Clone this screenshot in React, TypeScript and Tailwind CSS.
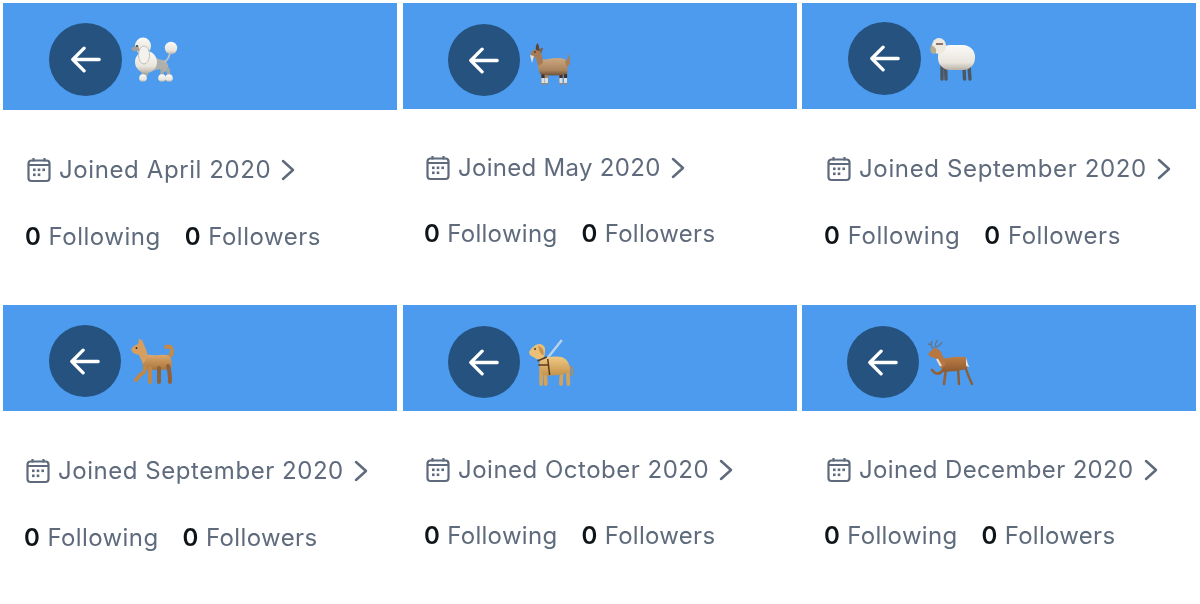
import type { ReactNode } from 'react';

function Emoji({ children }: { children: ReactNode }) {
  return (
    <svg width="50" height="50" viewBox="0 0 50 50" className="shrink-0">
      <defs>
        <linearGradient id="wool" x1="0" y1="0" x2="0" y2="1">
          <stop offset="0" stopColor="#fbfaf7" />
          <stop offset="0.7" stopColor="#e9e5dd" />
          <stop offset="1" stopColor="#b9b2a6" />
        </linearGradient>
        <linearGradient id="goat" x1="0" y1="0" x2="0" y2="1">
          <stop offset="0" stopColor="#cda87f" />
          <stop offset="0.7" stopColor="#a9835c" />
          <stop offset="1" stopColor="#6d5039" />
        </linearGradient>
        <linearGradient id="dog" x1="0" y1="0" x2="0" y2="1">
          <stop offset="0" stopColor="#e3ae70" />
          <stop offset="1" stopColor="#a8743e" />
        </linearGradient>
        <linearGradient id="lab" x1="0" y1="0" x2="0" y2="1">
          <stop offset="0" stopColor="#f1c983" />
          <stop offset="1" stopColor="#c4934c" />
        </linearGradient>
        <linearGradient id="deer" x1="0" y1="0" x2="0" y2="1">
          <stop offset="0" stopColor="#bd7e47" />
          <stop offset="1" stopColor="#8d5a30" />
        </linearGradient>
      </defs>
      {children}
    </svg>
  );
}

const poodle = (
  <Emoji>
    <path d="M20 21 Q30 23 36 25 Q39 29 38 35 L33 36 L30 33 L21 35 Z" fill="#aeb0ae" />
    <path d="M34 26 Q39 24 40 16" stroke="#c2c3c0" strokeWidth="1.8" fill="none" />
    <path d="M13 32 V41 M19 32 L16 39 M32 34 V41 M38 33 L39 41" stroke="#a8aaa8" strokeWidth="3.2" strokeLinecap="round" />
    <circle cx="41" cy="12" r="6.200" fill="url(#wool)" />
    <circle cx="13" cy="42" r="3.800" fill="url(#wool)" />
    <circle cx="32" cy="42" r="3.800" fill="url(#wool)" />
    <circle cx="39" cy="42" r="3.800" fill="url(#wool)" />
    <ellipse cx="16" cy="26" rx="11" ry="11" fill="url(#wool)" />
    <ellipse cx="13" cy="10" rx="8" ry="8.500" fill="url(#wool)" />
    <path d="M8 9 L1 12 L3 15 L10 15 Z" fill="#a5a29c" />
    <ellipse cx="14" cy="19" rx="5.500" ry="9" fill="#f4f2ee" stroke="#b9b5ad" strokeWidth="0.8" />
    <circle cx="7" cy="10" r="0.9" fill="#333" />
  </Emoji>
);

const goat = (
  <Emoji>
    <path d="M15 34 L15 46 M19 34 L18.500 46 M33 34 L33 46 M37 34 L37.500 46" stroke="#a9835c" strokeWidth="3.200" strokeLinecap="round" />
    <path d="M15 37 V41 M33 37 V41 M37.500 37 V41" stroke="#3f3129" strokeWidth="3.200" />
    <path d="M15 41 V46 M18.500 41 V46 M33 41 V46 M37.500 41 V46" stroke="#d7e0e4" strokeWidth="3" />
    <path d="M10 22 Q14 23 20 22 Q30 20 37 22 Q41 27 39 37 Q26 40 12 37 Q9 30 10 22 Z" fill="url(#goat)" />
    <path d="M37 24 Q42 22 39 16 Q43 19 42 27 L39 30 Z" fill="#a67f5b" />
    <path d="M3 15 Q7 11 11 13 Q14 15 15 26 L10 29 L8 21 L3 19 Z" fill="#a67c58" />
    <path d="M8 13 Q7 8 10 6 L12 14 Z" fill="#5e4331" />
    <path d="M12 13 Q13 10 15 11 L13 17 Z" fill="#7d5a40" />
    <path d="M2 18 L6 19 L4 26 Z" fill="#e4e0d6" />
    <circle cx="7" cy="15" r="0.8" fill="#22180f" />
  </Emoji>
);

const sheep = (
  <Emoji>
    <path d="M13 31 L13 44 M16.500 31 L17 44 M35 31 L35.500 44 M40 31 L41 44" stroke="#4e5660" strokeWidth="3.400" strokeLinecap="round" />
    <rect x="9" y="10" width="37" height="25" rx="12" fill="url(#wool)" />
    <ellipse cx="10" cy="11" rx="7" ry="8" fill="#eee9df" />
    <path d="M2 10 Q0 17 4 19 Q8 19 7 14 Q5 11 2 10 Z" fill="#b9ab8e" />
    <path d="M7 9 H14" stroke="#6d4a4a" strokeWidth="1.500" />
  </Emoji>
);

const dog = (
  <Emoji>
    <path d="M33 20 Q43 20 43 13 Q43 7 37 9" stroke="#c48a4c" strokeWidth="4" fill="none" strokeLinecap="round" />
    <path d="M13 15 Q20 18 30 17 Q38 16 41 19 Q44 24 42 31 Q28 33 14 31 Z" fill="url(#dog)" />
    <path d="M39 28 Q41 34 41 44 M30 30 L30 44" stroke="#916236" strokeWidth="4" strokeLinecap="round" fill="none" />
    <path d="M21 30 L21 44 M16 29 Q17 34 11 37 L7 42" stroke="#bf8749" strokeWidth="4" strokeLinecap="round" fill="none" />
    <path d="M2 11 Q5 7 9 6 L10 1 L13 2 L16 9 Q19 15 18 20 L14 26 L10 17 L4 15 Z" fill="#d69e5f" />
    <circle cx="7.500" cy="10" r="0.9" fill="#3a2514" />
  </Emoji>
);

const guideDog = (
  <Emoji>
    <g transform="scale(0.94 1)">
      <path d="M20 20 L36 1" stroke="#b9d3ec" strokeWidth="2.600" />
      <path d="M46 27 Q48 33 46 37" stroke="#b98a47" strokeWidth="2" fill="none" />
      <path d="M14 24 L14 45 M18 30 L19 45 M36 32 L35 45 M42 30 L43 45" stroke="#d3a35c" strokeWidth="4" strokeLinecap="round" />
      <path d="M13 21 Q24 16 36 18 Q45 21 45 33 Q30 38 16 36 Q12 30 13 21 Z" fill="url(#lab)" />
      <path d="M1 13 Q4 8 8 6 Q15 3 18 9 Q19 16 15 21 L9 20 L2 16 Z" fill="#eabf78" />
      <path d="M11 7 Q17 8 17 16 Q12 16 11 7 Z" fill="#c79550" />
      <circle cx="7.500" cy="10" r="0.9" fill="#3a2514" />
      <path d="M10 22 L20 18 M11 26 H22 M21 20 L23 36" stroke="#5d3a1e" strokeWidth="1.600" fill="none" />
    </g>
  </Emoji>
);

const deer = (
  <Emoji>
    <path d="M6 10 Q3 6 5 2 M8 9 Q8 4 11 1 M9 8 Q13 7 15 3 M5 6 L1 5" stroke="#64748b" strokeWidth="1.300" fill="none" />
    <path d="M38 27 Q40 34 45 45 M31 30 L32 45" stroke="#8d5e35" strokeWidth="2.400" strokeLinecap="round" fill="none" />
    <path d="M19 30 L17 45 M16 31 Q13 36 8 34 L5 31" stroke="#91613a" strokeWidth="2.600" strokeLinecap="round" fill="none" />
    <path d="M13 21 Q24 17 38 18 Q42 24 40 30 Q28 33 16 33 Z" fill="url(#deer)" />
    <path d="M1 15 L7 9 L11 10 L14 13 L19 25 L14 30 L10 20 L4 18 Z" fill="#b9773f" />
    <path d="M39 19 L42 28 L39 27 Z" fill="#e9e2d6" />
    <path d="M10 20 L14 27" stroke="#ece5d8" strokeWidth="2" />
  </Emoji>
);

function Calendar() {
  return (
    <svg width="24" height="26" viewBox="0 0 24 26" fill="none" stroke="#5f6b7c" strokeWidth="2.200" className="shrink-0">
      <rect x="1.500" y="3.500" width="21" height="20.500" rx="3" />
      <path d="M1.500 8 H22.500 M6.500 1 V4.500 M17.500 1 V4.500" />
      <g fill="#5f6b7c" stroke="none">
        <rect x="6" y="11.500" width="2.600" height="2.600" />
        <rect x="10.700" y="11.500" width="2.600" height="2.600" />
        <rect x="15.400" y="11.500" width="2.600" height="2.600" />
        <rect x="6" y="16.500" width="2.600" height="2.600" />
        <rect x="10.700" y="16.500" width="2.600" height="2.600" />
      </g>
    </svg>
  );
}

type CardProps = {
  joined: string;
  emoji: ReactNode;
  headerClass: string;
  circleClass: string;
  joinedClass: string;
  statsClass: string;
};

function Card({ joined, emoji, headerClass, circleClass, joinedClass, statsClass }: CardProps) {
  return (
    <div className="w-[394px]">
      <div className={`flex bg-[#4c9bee] ${headerClass}`}>
        <button className={`flex shrink-0 items-center justify-center rounded-full bg-[#25527f] ${circleClass}`}>
          <svg width="32" height="27" viewBox="0 0 34 28" fill="none" stroke="#ffffff" strokeWidth="3.500" strokeLinecap="round" strokeLinejoin="round">
            <path d="M31 14 H3 M15 2 L3 14 L15 26" />
          </svg>
        </button>
        <div className="ml-[8px] mt-[13px]">{emoji}</div>
      </div>
      <div className={`flex items-center gap-[8px] text-[24px] leading-[30px] text-[#5f6b7c] ${joinedClass}`}>
        <Calendar />
        <span>{joined}</span>
        <svg width="16" height="24" viewBox="0 0 16 24" fill="none" stroke="#5f6b7c" strokeWidth="2.500" strokeLinecap="round" strokeLinejoin="round" className="ml-[1px]">
          <path d="M3 3 L13 12 L3 21" />
        </svg>
      </div>
      <div className={`flex gap-[24px] text-[24px] leading-[30px] text-[#5f6b7c] ${statsClass}`}>
        <span><b className="font-semibold text-[#0f1419]">0</b> Following</span>
        <span><b className="font-semibold text-[#0f1419]">0</b> Followers</span>
      </div>
    </div>
  );
}

export default function App() {
  return (
    <div className="h-[604px] w-[1200px] overflow-hidden bg-white pl-[3px] pt-[3px] font-['Inter','Liberation_Sans',sans-serif] blur-[0.4px]">
      <div className="grid grid-cols-[400px_399px_398px] grid-rows-[302px_1fr]">
        <Card joined="Joined April 2020" emoji={poodle} headerClass="h-[107px] pt-[20px]" circleClass="ml-[46px] h-[73px] w-[73px]" joinedClass="mt-[45px] pl-[24px] tracking-[0.6px]" statsClass="mt-[37px] pl-[22px] tracking-[0.5px]" />
        <Card joined="Joined May 2020" emoji={goat} headerClass="h-[106px] pt-[21px]" circleClass="ml-[45px] h-[72px] w-[72px]" joinedClass="mt-[44px] pl-[23px] tracking-[0.3px]" statsClass="mt-[36px] pl-[21px] tracking-[0.3px]" />
        <Card joined="Joined September 2020" emoji={sheep} headerClass="h-[106px] pt-[19px]" circleClass="ml-[46px] h-[73px] w-[73px]" joinedClass="mt-[45px] pl-[25px] tracking-[0.65px]" statsClass="mt-[37px] pl-[22px] tracking-[0.55px]" />
        <Card joined="Joined September 2020" emoji={dog} headerClass="h-[106px] pt-[20px]" circleClass="ml-[46px] h-[72px] w-[72px]" joinedClass="mt-[45px] pl-[23px] tracking-[0.55px]" statsClass="mt-[37px] pl-[21px] tracking-[0.4px]" />
        <Card joined="Joined October 2020" emoji={guideDog} headerClass="h-[106px] pt-[21px]" circleClass="ml-[45px] h-[72px] w-[72px]" joinedClass="mt-[44px] pl-[23px] tracking-[0.5px]" statsClass="mt-[36px] pl-[21px] tracking-[0.3px]" />
        <Card joined="Joined December 2020" emoji={deer} headerClass="h-[106px] pt-[21px]" circleClass="ml-[45px] h-[72px] w-[72px]" joinedClass="mt-[44px] pl-[25px] tracking-[0.35px]" statsClass="mt-[36px] pl-[22px] tracking-[0.3px]" />
      </div>
    </div>
  );
}
